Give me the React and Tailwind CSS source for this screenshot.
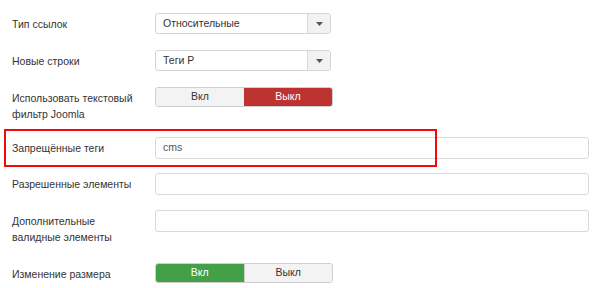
import React from 'react';

function Caret() {
  return (
    <svg width="7" height="4" viewBox="0 0 7 4" className="block">
      <path d="M0 0h7L3.5 4z" fill="#555" />
    </svg>
  );
}

function Select({ value }) {
  return (
    <div className="flex h-[21px] w-[176px] rounded-[3px] border border-[#d4d4d4] bg-white">
      <div className="flex flex-1 items-center pl-[7px] text-[10.5px] text-[#333]">{value}</div>
      <div className="flex w-[23px] items-center justify-center rounded-r-[3px] border-l border-[#d9d9d9] bg-[#f2f2f2]">
        <Caret />
      </div>
    </div>
  );
}

function Toggle({ on }) {
  return (
    <div className="flex h-[20px] w-[178px] overflow-hidden rounded-[3px] border border-[#cfcfcf] text-[10.5px]">
      <div
        className={
          on
            ? 'flex flex-1 items-center justify-center bg-[#43a047] text-white'
            : 'flex flex-1 items-center justify-center bg-[#f3f3f3] text-[#333]'
        }
      >
        Вкл
      </div>
      <div
        className={
          on
            ? 'flex flex-1 items-center justify-center border-l border-[#cfcfcf] bg-[#f3f3f3] text-[#333]'
            : 'flex flex-1 items-center justify-center bg-[#bd3330] text-white'
        }
      >
        Выкл
      </div>
    </div>
  );
}

function TextInput({ value }) {
  return (
    <div className="flex h-[22px] w-[434px] items-center rounded-[3px] border border-[#d9d9d9] bg-white pl-[7px] text-[10.5px] text-[#555]">
      {value}
    </div>
  );
}

function Row({ label, children, className = '' }) {
  return (
    <div className={`flex items-start ${className}`}>
      <div className="w-[143px] pt-[3px] pr-3 text-[10.5px] leading-[16px] text-[#333]">{label}</div>
      {children}
    </div>
  );
}

export default function App() {
  return (
    <div
      className="h-[288px] w-[600px] overflow-hidden bg-white pl-[12px] pt-[13px]"
      style={{ fontFamily: '"Liberation Sans", Arial, sans-serif' }}
    >
      <Row label="Тип ссылок">
        <Select value="Относительные" />
      </Row>
      <Row label="Новые строки" className="mt-[16px]">
        <Select value="Теги P" />
      </Row>
      <Row label="Использовать текстовый фильтр Joomla" className="mt-[16px]">
        <Toggle on={false} />
      </Row>
      <div className="relative mt-[15px]">
        <Row label="Запрещённые теги">
          <TextInput value="cms" />
        </Row>
        {/* highlight annotation */}
        <div className="pointer-events-none absolute left-[-8px] top-[-8px] h-[38px] w-[433px] border-2 border-[#f5080c]" />
      </div>
      <Row label="Разрешенные элементы" className="mt-[14px]">
        <TextInput value="" />
      </Row>
      <Row label="Дополнительные валидные элементы" className="mt-[15px]">
        <TextInput value="" />
      </Row>
      <Row label="Изменение размера" className="mt-[18px]">
        <Toggle on={true} />
      </Row>
    </div>
  );
}
